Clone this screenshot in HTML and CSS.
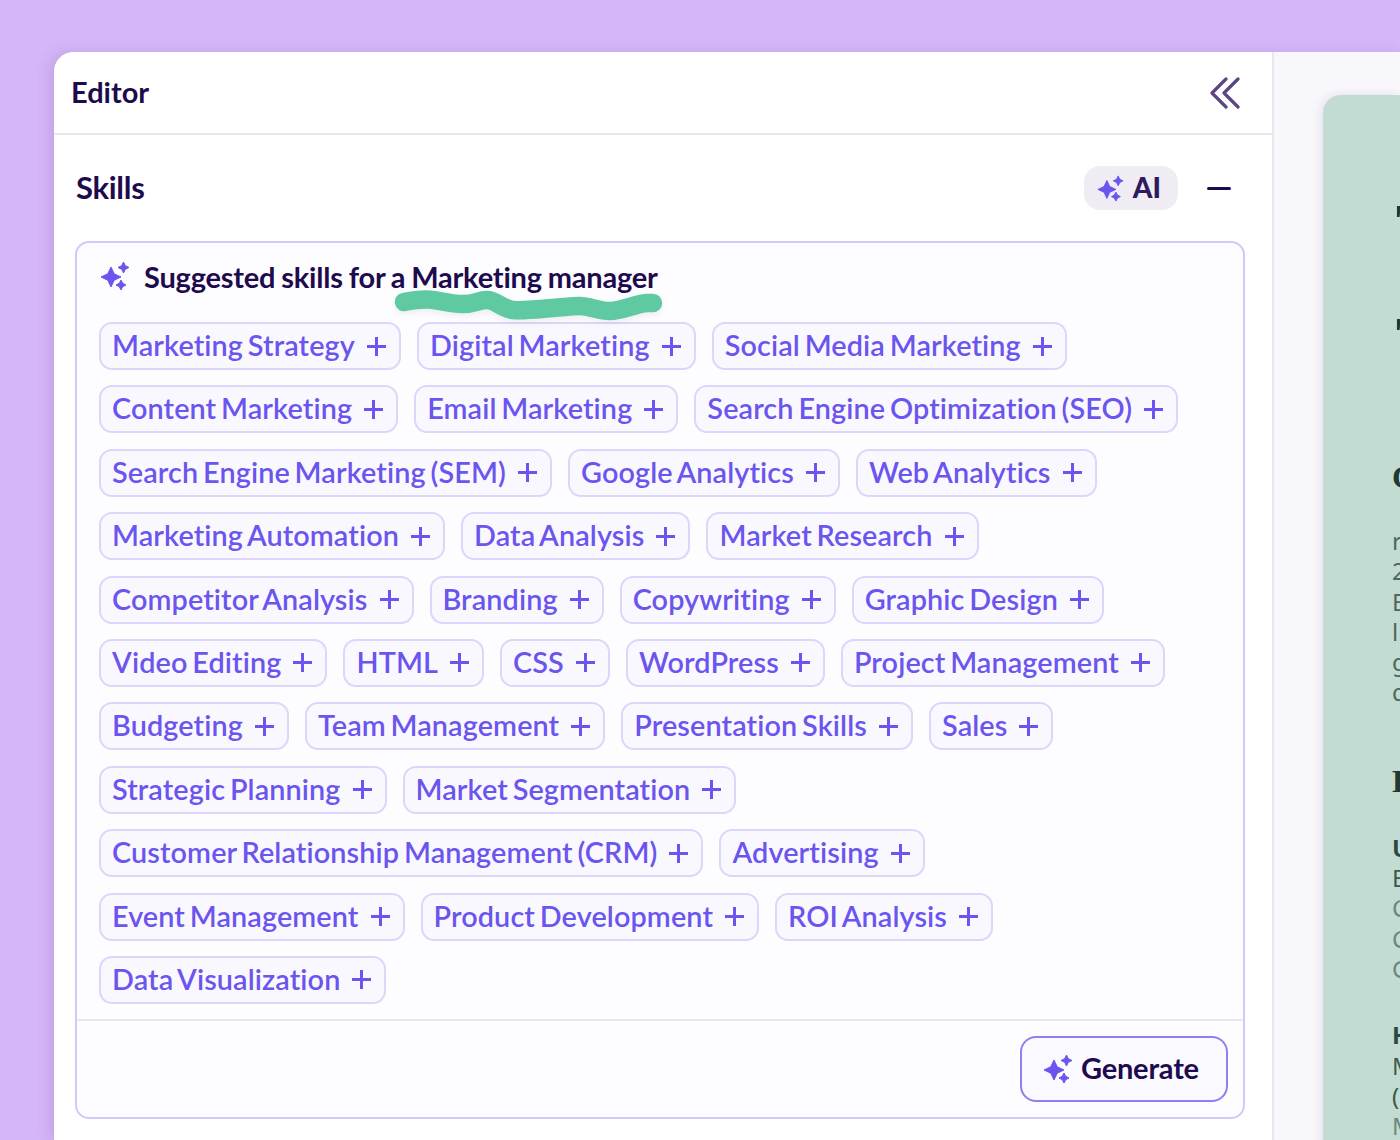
FILE: index.html
```html
<!DOCTYPE html>
<html lang="en">
<head>
    <meta charset="UTF-8">
    <title>Resume Editor</title>
    <link rel="stylesheet" href="styles.css">
</head>
<body>
    <div class="shell">
        <section class="editor">
            <header class="editor_head">
                <h1>Editor</h1>
                <svg class="collapse" viewBox="0 0 30 32" width="30" height="32" fill="none" stroke="#5c4680" stroke-width="3.2" stroke-linecap="round" stroke-linejoin="round">
                    <path d="M16 2 2 16l14 14"/>
                    <path d="M28 2 14 16l14 14"/>
                </svg>
            </header>
            <div class="section_head">
                <h2>Skills</h2>
                <div class="section_actions">
                    <button class="ai_btn">
                        <svg class="spark" viewBox="0 0 30 30" width="27" height="27"><use href="#sparkle"/></svg>
                        <span>AI</span>
                    </button>
                    <span class="minus"></span>
                </div>
            </div>
            <div class="suggest">
                <div class="suggest_body">
                    <div class="suggest_title">
                        <svg class="spark" viewBox="0 0 30 30" width="30" height="30"><use href="#sparkle"/></svg>
                        <span>Suggested skills for a <span class="role">Marketing manager
                            <svg class="squiggle" viewBox="0 0 275 40" width="275" height="40" fill="none">
                                <path d="M14 18C24 16 32 15 40 15.600S60 20 73 20 88 16 97 16 112 25 123 26 150 25 163 24 180 22 190 22 208 27 220 27 245 20 257 19L263 19" stroke="#5fcaa2" stroke-width="18.500" stroke-linecap="round" stroke-linejoin="round"/>
                            </svg>
                        </span></span>
                    </div>
                    <div class="chips">
                        <button class="chip">Marketing Strategy<i></i></button>
                        <button class="chip">Digital Marketing<i></i></button>
                        <button class="chip">Social Media Marketing<i></i></button>
                        <button class="chip">Content Marketing<i></i></button>
                        <button class="chip">Email Marketing<i></i></button>
                        <button class="chip">Search Engine Optimization (SEO)<i></i></button>
                        <button class="chip">Search Engine Marketing (SEM)<i></i></button>
                        <button class="chip">Google Analytics<i></i></button>
                        <button class="chip">Web Analytics<i></i></button>
                        <button class="chip">Marketing Automation<i></i></button>
                        <button class="chip">Data Analysis<i></i></button>
                        <button class="chip">Market Research<i></i></button>
                        <button class="chip">Competitor Analysis<i></i></button>
                        <button class="chip">Branding<i></i></button>
                        <button class="chip">Copywriting<i></i></button>
                        <button class="chip">Graphic Design<i></i></button>
                        <button class="chip">Video Editing<i></i></button>
                        <button class="chip">HTML<i></i></button>
                        <button class="chip">CSS<i></i></button>
                        <button class="chip">WordPress<i></i></button>
                        <button class="chip">Project Management<i></i></button>
                        <button class="chip">Budgeting<i></i></button>
                        <button class="chip">Team Management<i></i></button>
                        <button class="chip">Presentation Skills<i></i></button>
                        <button class="chip">Sales<i></i></button>
                        <button class="chip">Strategic Planning<i></i></button>
                        <button class="chip">Market Segmentation<i></i></button>
                        <button class="chip">Customer Relationship Management (CRM)<i></i></button>
                        <button class="chip">Advertising<i></i></button>
                        <button class="chip">Event Management<i></i></button>
                        <button class="chip">Product Development<i></i></button>
                        <button class="chip">ROI Analysis<i></i></button>
                        <button class="chip">Data Visualization<i></i></button>
                    </div>
                </div>
                <div class="suggest_foot">
                    <button class="generate">
                        <svg class="spark" viewBox="0 0 30 30" width="30" height="30"><use href="#sparkle"/></svg>
                        <span>Generate</span>
                    </button>
                </div>
            </div>
        </section>
        <aside class="preview">
            <div class="resume">
                <div class="name_line">Taylor</div>
                <div class="name_line">Thomas</div>
                <h3 class="res_h first">Career summary</h3>
                <p class="res_p">results-driven marketing manager</p>
                <p class="res_p">2020 and growing the brand online</p>
                <p class="res_p">Email and social media campaigns</p>
                <p class="res_p">lifting qualified leads and revenue</p>
                <p class="res_p">growth across teams and channels</p>
                <p class="res_p">data-led decisions every quarter</p>
                <h3 class="res_h">Experience</h3>
                <p class="res_b">Unilever</p>
                <p class="res_m">Brand Manager</p>
                <p class="res_l">Campaign planning</p>
                <p class="res_l">Content strategy</p>
                <p class="res_l">Growth reporting</p>
                <p class="res_b gap">HubSpot</p>
                <p class="res_m">Marketing Lead</p>
                <p class="res_m">(Remote)</p>
                <p class="res_l">Managed budgets</p>
            </div>
        </aside>
    </div>

    <svg class="defs" width="0" height="0">
        <symbol id="sparkle" viewBox="0 0 30 30">
            <path fill="#6a55ee" stroke="#6a55ee" stroke-width="1" stroke-linejoin="round" d="M11 6 14.200 12.800 21 16 14.200 19.200 11 26 7.800 19.200 1 16 7.800 12.800Z"/>
            <path fill="#6a55ee" stroke="#6a55ee" stroke-width="1" stroke-linejoin="round" d="M23.500 1 25.300 4.700 29 6.500 25.300 8.300 23.500 12 21.700 8.300 18 6.500 21.700 4.700Z"/>
            <path fill="#6a55ee" stroke="#6a55ee" stroke-width="1" stroke-linejoin="round" d="M21 19 22.700 22.300 26 24 22.700 25.700 21 29 19.300 25.700 16 24 19.300 22.300Z"/>
        </symbol>
    </svg>
</body>
</html>
```

FILE: styles.css
```css
html, body {
    margin: 0;
    padding: 0;
    height: 100%;
    overflow: hidden;
    background-color: #d5b6f8;
    font-family: "Lato", "Liberation Sans", sans-serif;
    color: #1d0b4d;
}

button {
    font-family: inherit;
    cursor: pointer;
}

.defs {
    position: absolute;
}

.shell {
    display: flex;
    height: calc(100vh - 52px);
    margin: 52px 0 0 54px;
    background-color: #f8f7fb;
    border-radius: 20px 0 0 0;
    box-shadow: -6px 0 14px rgba(80, 40, 120, 0.12);
}

/* Editor column */
.editor {
    width: 1218px;
    flex-shrink: 0;
    background-color: #fff;
    border-right: 2px solid #e8e6ee;
    border-radius: 20px 0 0 0;
}

.editor_head {
    display: flex;
    justify-content: space-between;
    align-items: center;
    height: 81px;
    padding: 0 32px 0 17px;
    border-bottom: 2px solid #e8e6ee;
}

.editor_head h1 {
    margin: 0 0 2px;
    font-size: 29px;
    font-weight: 700;
}

.section_head {
    display: flex;
    justify-content: space-between;
    align-items: center;
    height: 44px;
    margin: 31px 41px 0 22px;
}

.section_head h2 {
    margin: 0 0 2px;
    font-size: 31px;
    font-weight: 700;
    letter-spacing: -0.3px;
}

.section_actions {
    display: flex;
    align-items: center;
    gap: 29px;
}

.ai_btn {
    display: flex;
    align-items: center;
    gap: 9px;
    height: 44px;
    padding: 0 17px 0 13px;
    border: 0;
    border-radius: 16px;
    background-color: #efedf3;
    color: #2f1a60;
    font-size: 28px;
    font-weight: 900;
}

.ai_btn span {
    margin-bottom: 2px;
}

.minus {
    width: 24px;
    height: 3px;
    border-radius: 2px;
    background-color: #1d0b4d;
}

/* Suggested skills box */
.suggest {
    margin: 31px 27px 0 21px;
    border: 2px solid #d2c8fa;
    border-radius: 14px;
    background-color: #fdfcff;
}

.suggest_body {
    padding: 15px 18px 15px 22px;
    border-bottom: 2px solid #e8e6f0;
}

.suggest_title {
    display: flex;
    align-items: center;
    gap: 14px;
    height: 36px;
    margin-bottom: 28px;
    font-size: 29px;
    font-weight: 700;
    letter-spacing: -0.2px;
    word-spacing: -1px;
}

.suggest_title .spark {
    margin-left: 1px;
}

.role {
    position: relative;
}

.squiggle {
    position: absolute;
    left: -21px;
    top: 25px;
    filter: drop-shadow(0 3px 3px rgba(60, 60, 100, 0.08));
}

.chips {
    display: flex;
    flex-wrap: wrap;
    gap: 15.4px 16px;
}

.chip {
    display: flex;
    align-items: center;
    gap: 12px;
    height: 48px;
    padding: 0 13px 2px 11px;
    border: 2px solid #dcd6fb;
    border-radius: 13px;
    background-color: #faf8ff;
    color: #6a55ee;
    font-size: 28.800px;
    font-weight: 600;
    letter-spacing: 0.12px;
    word-spacing: -2.5px;
}

/* plus sign */
.chip i {
    width: 19px;
    height: 19px;
    margin-top: 2px;
    background:
        linear-gradient(#6a55ee, #6a55ee) center / 100% 3px no-repeat,
        linear-gradient(#6a55ee, #6a55ee) center / 3px 100% no-repeat;
}

.suggest_foot {
    display: flex;
    justify-content: flex-end;
    padding: 15px 15px 15px 0;
}

.generate {
    display: flex;
    align-items: center;
    gap: 8px;
    width: 208px;
    height: 66px;
    padding: 0 0 0 21px;
    border: 2px solid #8f7ff0;
    border-radius: 16px;
    background-color: #f9f9ff;
    color: #1d0b4d;
    font-size: 29px;
    font-weight: 700;
    letter-spacing: -0.2px;
}

.generate span {
    margin-bottom: 2px;
}

/* Resume preview, cut off by the window */
.preview {
    flex: 1;
    padding: 43px 0 0 49px;
    overflow: hidden;
}

.resume {
    height: 1100px;
    padding: 74px 0 0 69px;
    border-radius: 18px 0 0 0;
    background-color: #c2dcd3;
    box-shadow: -2px 0 10px rgba(80, 60, 130, 0.12);
    color: #4d6860;
    font-family: "Noto Sans", sans-serif;
    font-size: 24px;
    line-height: 30.300px;
    white-space: nowrap;
    overflow: hidden;
}

.resume p {
    margin: 0;
}

.name_line {
    margin-left: 4px;
    font-family: "Liberation Serif", serif;
    font-size: 60px;
    line-height: 113px;
    font-weight: 700;
    color: #1e3a32;
}

.res_h {
    margin: 0;
    font-family: "Liberation Serif", serif;
    font-size: 32px;
    line-height: 40px;
    font-weight: 700;
    color: #1e3a32;
    margin-top: 53px;
    margin-bottom: 32px;
}

.res_h.first {
    margin-top: 62px;
    margin-bottom: 29px;
}

.res_b {
    color: #2a4a41;
    font-weight: 700;
}

.res_m {
    color: #3a5a50;
}

.res_l {
    color: #6a8680;
}

.resume .gap {
    margin-top: 36px;
}
```
